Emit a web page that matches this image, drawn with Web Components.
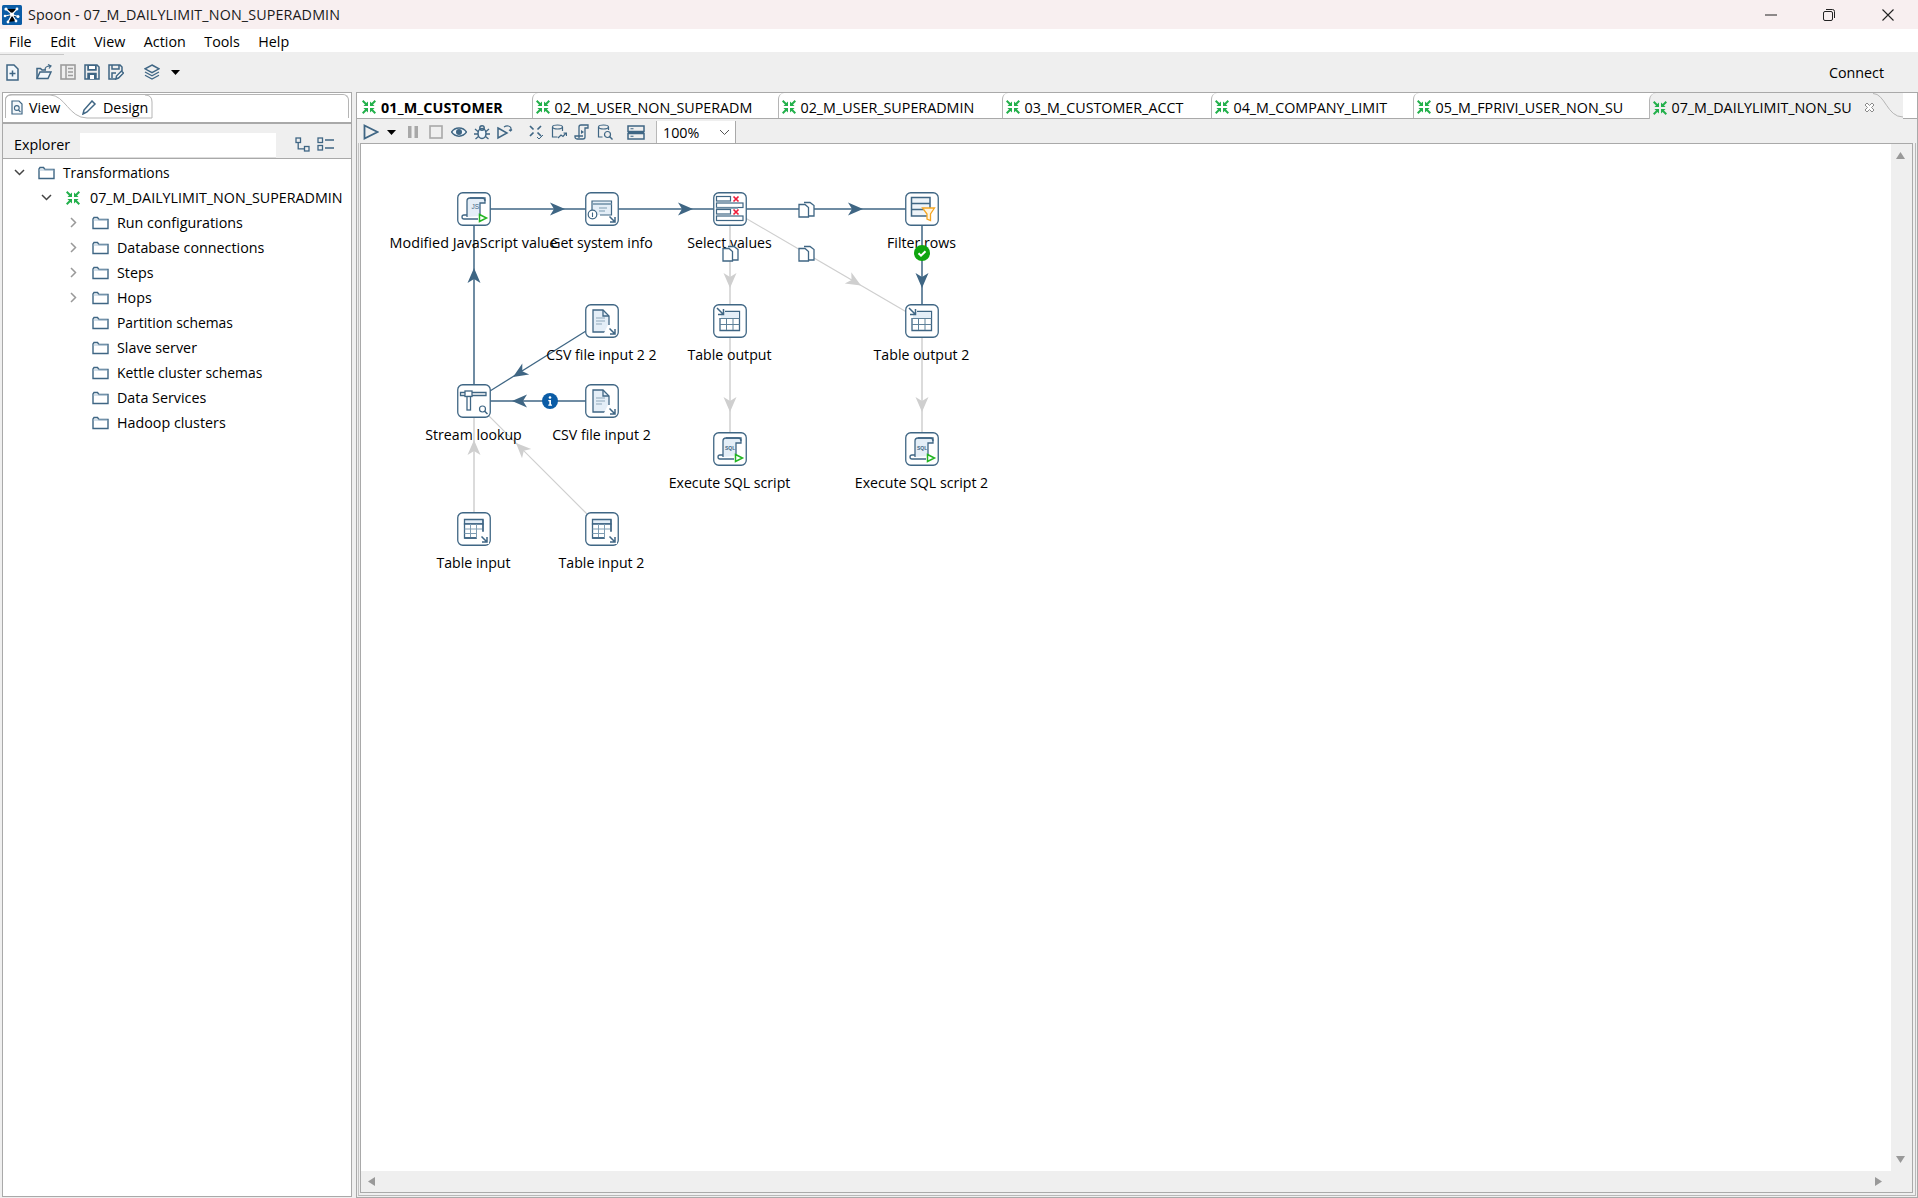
<!DOCTYPE html>
<html><head><meta charset="utf-8"><title>Spoon</title>
<style>
html,body{margin:0;padding:0;height:100%;overflow:hidden;background:#fff}
body{font:14.3px "Open Sans","Noto Sans",sans-serif;color:#000}
</style></head><body>
<spoon-app>
  <title-bar slot="title">Spoon - 07_M_DAILYLIMIT_NON_SUPERADMIN</title-bar>
  <menu-bar slot="menu"><span>File</span><span>Edit</span><span>View</span><span>Action</span><span>Tools</span><span>Help</span></menu-bar>
  <main-toolbar slot="toolbar"></main-toolbar>
  <explorer-panel slot="left">
    <tree-row level="0" state="open" icon="folder" style="font-size:13.8px">Transformations</tree-row>
    <tree-row level="1" state="open" icon="trans">07_M_DAILYLIMIT_NON_SUPERADMIN</tree-row>
    <tree-row level="2" state="closed" icon="folder">Run configurations</tree-row>
    <tree-row level="2" state="closed" icon="folder">Database connections</tree-row>
    <tree-row level="2" state="closed" icon="folder">Steps</tree-row>
    <tree-row level="2" state="closed" icon="folder">Hops</tree-row>
    <tree-row level="2" icon="folder" style="font-size:13.9px">Partition schemas</tree-row>
    <tree-row level="2" icon="folder">Slave server</tree-row>
    <tree-row level="2" icon="folder" style="font-size:13.9px">Kettle cluster schemas</tree-row>
    <tree-row level="2" icon="folder">Data Services</tree-row>
    <tree-row level="2" icon="folder">Hadoop clusters</tree-row>
  </explorer-panel>
  <graph-panel slot="right">
    <graph-tab slot="tabs" w="175" bold>01_M_CUSTOMER</graph-tab>
    <graph-tab slot="tabs" w="246">02_M_USER_NON_SUPERADM</graph-tab>
    <graph-tab slot="tabs" w="224">02_M_USER_SUPERADMIN</graph-tab>
    <graph-tab slot="tabs" w="209">03_M_CUSTOMER_ACCT</graph-tab>
    <graph-tab slot="tabs" w="202">04_M_COMPANY_LIMIT</graph-tab>
    <graph-tab slot="tabs" w="236">05_M_FPRIVI_USER_NON_SU</graph-tab>
    <graph-tab slot="tabs" w="254" active>07_M_DAILYLIMIT_NON_SU</graph-tab>

    <hop-lines></hop-lines>
    <step-node x="457" y="192" icon="js" style="font-size:14.4px">Modified JavaScript value</step-node>
    <step-node x="585" y="192" icon="sys">Get system info</step-node>
    <step-node x="713" y="192" icon="select">Select values</step-node>
    <step-node x="905" y="192" icon="filter">Filter rows</step-node>
    <step-node x="585" y="304" icon="csv">CSV file input 2 2</step-node>
    <step-node x="713" y="304" icon="tout">Table output</step-node>
    <step-node x="905" y="304" icon="tout">Table output 2</step-node>
    <step-node x="457" y="384" icon="lookup">Stream lookup</step-node>
    <step-node x="585" y="384" icon="csv">CSV file input 2</step-node>
    <step-node x="713" y="432" icon="sql">Execute SQL script</step-node>
    <step-node x="905" y="432" icon="sql">Execute SQL script 2</step-node>
    <step-node x="457" y="512" icon="tin">Table input</step-node>
    <step-node x="585" y="512" icon="tin">Table input 2</step-node>
    <hop-badge x="798" y="201" kind="copy"></hop-badge>
    <hop-badge x="722" y="245" kind="copy"></hop-badge>
    <hop-badge x="798" y="245" kind="copy"></hop-badge>
    <hop-badge x="914" y="245" kind="ok"></hop-badge>
    <hop-badge x="542" y="393" kind="info"></hop-badge>
  </graph-panel>
</spoon-app>
<script>
const B='#3f6684', L='#e4eef7', G='#22b04b', ORIGIN={x:361,y:144};
const svg=(w,h,body,vb)=>`<svg width="${w}" height="${h}" viewBox="${vb||`0 0 ${w} ${h}`}" style="display:block;flex:none" fill="none" stroke="${B}" stroke-width="1.5">${body}</svg>`;
const transIcon=()=>svg(16,16,`<g fill="${G}" stroke="none"><path d="M7 7H2.4L4 5.4 1 2.4 2.4 1l3 3L7 2.4zM9 7h4.6L12 5.4l3-3L13.6 1l-3 3L9 2.4zM7 9H2.4L4 10.6l-3 3L2.4 15l3-3L7 13.6zM9 9h4.6L12 10.6l3 3L13.6 15l-3-3L9 13.6z"/></g>`);
const folderIcon=()=>svg(17,14,`<path d="M1 3V12.5H16V3.5H7L5.5 1.5H2z" fill="#fff" stroke-width="1.4"/><path d="M1.5 4H15.5" stroke="#a9c0d2" stroke-width="1"/>`);
const define=(n,css,html,extra)=>{customElements.define(n,class extends HTMLElement{
  connectedCallback(){ if(this.shadowRoot) return; const r=this.attachShadow({mode:'open'});
    r.innerHTML=`<style>${css}</style>`+(typeof html==='function'?html(this):html); if(extra) extra(this,r);}
});};

define('spoon-app',`:host{display:flex;flex-direction:column;height:100vh;width:100%;overflow:hidden}
 .main{flex:1;min-height:0;display:flex;background:#efefef;padding-left:2px;gap:4px}`,
 `<slot name="title"></slot><slot name="menu"></slot><slot name="toolbar"></slot><div class="main"><slot name="left"></slot><slot name="right"></slot></div>`);

define('title-bar',`:host{display:flex;align-items:center;height:29px;background:#f8eff0;flex:none;font-size:14.3px;color:#1a1a1a;letter-spacing:.13px}
 .logo{margin-left:2px;margin-right:6px}
 .t{flex:1}
 .c{display:flex;align-items:center;justify-content:center;width:58.5px;height:29px}
 .win{display:flex;margin-right:1px}`,
 ()=>`<div class="logo"><svg width="20" height="20" viewBox="0 0 20 20" style="display:block"><rect width="20" height="20" rx="1.5" fill="#0b5ca6"/><g stroke="#fff" stroke-width="1.2"><path d="M4 4l6 5.5L15 4M3 11l7-1.5 6 2M6 17l4-7.5 4 6.5"/></g><g fill="#fff"><circle cx="4" cy="4" r="1.6"/><circle cx="15" cy="4" r="1.4"/><circle cx="3" cy="11" r="1.3"/><circle cx="16" cy="11.5" r="1.5"/><circle cx="6" cy="17" r="1.4"/><circle cx="14" cy="16" r="1.4"/><circle cx="10" cy="9.5" r="2"/></g></svg></div>
 <div class="t"><slot></slot></div>
 <div class="win"><div class="c"><svg width="12" height="2" style="display:block"><path d="M0 1H12" stroke="#222" stroke-width="1"/></svg></div>
 <div class="c"><svg width="12" height="12" style="display:block" fill="none" stroke="#222"><rect x=".5" y="2.5" width="9" height="9" rx="1.5"/><path d="M3 .5h6.5a2 2 0 0 1 2 2V9"/></svg></div>
 <div class="c"><svg width="12" height="12" style="display:block" stroke="#222" stroke-width="1.1"><path d="M.5.5l11 11M11.5.5l-11 11"/></svg></div></div>`);

define('menu-bar',`:host{display:flex;align-items:center;gap:18.5px;height:23px;padding:1px 0 0 9px;box-sizing:border-box;background:#fff;flex:none;font-size:14.3px}`,`<slot></slot>`);

define('main-toolbar',`:host{display:flex;align-items:center;height:40px;flex:none;background:#efefef linear-gradient(#c8c8c8,#c8c8c8) 0 2px/64px 1px no-repeat;padding-left:6px;font-size:14.3px}
 .i{display:block;flex:none}.sp{flex:1}.conn{margin-right:34px}`,
 ()=>`<span style="margin-right:17px">${svg(13,17,`<path d="M1 1h7l4 4v11H1z" fill="#f2f7fb"/><path d="M6.5 6.5v6M3.5 9.5h6"/>`)}</span>
 <span style="margin-right:8px">${svg(16,16,`<path d="M1 14.5V4.5h3.5l1.5 1.5h4" /><path d="M1 14.5l3-6.5h11l-3 6.5z" fill="#f2f7fb"/><path d="M9 6c0-3 2-4 5-4M12 .5l3 1.5-2 2.500" stroke-width="1.2"/>`)}</span>
 <span style="margin-right:8px">${svg(16,16,`<rect x="1" y="1" width="14" height="14" fill="#eee" stroke="#9c9c9c" stroke-width="1.6"/><path d="M6 1v14M8 4.500h5M8 8h5M8 11.500h5" stroke="#9c9c9c" stroke-width="1.5"/>`)}</span>
 <span style="margin-right:8px">${svg(16,16,`<path d="M1 1h12l2 2v12H1z"/><path d="M4 1v5h8V1M4 15V9.500h8V15" fill="${B}" stroke="${B}"/><rect x="6" y="11" width="4" height="4" fill="#fff" stroke="none"/><rect x="5" y="2" width="6" height="3" fill="#fff" stroke="none"/>`)}</span>
 <span style="margin-right:20px">${svg(16,16,`<path d="M8 15H1V1h11l2 2v4"/><path d="M4 1v4h7V1" /><path d="M4 14V9h4" /><path d="M8 15l.5-3 5-5 2 2-5 5z" fill="#fff"/>`)}</span>
 <span style="margin-right:11px">${svg(16,16,`<path d="M8 1l7 3.800-7 3.800-7-3.800z"/><path d="M1 8l7 3.800L15 8M1 11.200L8 15l7-3.800" stroke-width="1.3"/>`)}</span>
 ${svg(9,5,`<path d="M0 0h9L4.500 5z" fill="#000" stroke="none"/>`)}
 <span class="sp"></span><span class="conn">Connect</span>`);

define('explorer-panel',`:host{display:flex;flex-direction:column;width:350px;flex:none;box-sizing:border-box;border:1px solid #a9a9a9;background:#fff;height:calc(100% - 1px);margin-bottom:1px}
 .strip{position:relative;height:24px;margin:1px 2px 0 2px;border:1px solid #b5b5b5;border-bottom:0;border-radius:6px 6px 0 0;box-sizing:border-box;flex:none}
 .strip svg.o{position:absolute;left:-1px;top:-1px}
 .tab{position:absolute;top:0;display:flex;align-items:center;gap:6px;height:24px}
 .thick{height:4px;background:#fff;border-bottom:2px solid #a9a9a9;flex:none;margin:0}
 .ex{display:flex;align-items:center;height:26px;padding-top:8px;background:#efefef;border-bottom:1px solid #a9a9a9;flex:none}
 .ex .lbl{margin-left:11px;width:66px;margin-top:-1px}
 .inp{width:196px;height:24px;background:#fff;box-shadow:0 1px 0 #ddd}
 .tools{display:flex;gap:7px;margin-left:19px;margin-top:-2px}
 .tree{flex:1;padding-top:1px;background:#fff}`,
 ()=>`<div class="strip"><svg class="o" width="346" height="25" fill="none"><path d="M0 24V7Q0 1 7 1H45C60 1 64 24 82 24H147V8Q147 1 140 1" stroke="#b5b5b5"/></svg>
  <div class="tab" style="left:5px">${svg(12,15,`<path d="M1 1h7l3 3v10H1z" fill="#f4f8fb" stroke-width="1.2"/><circle cx="5.800" cy="8" r="2.400" stroke-width="1.1"/><path d="M7.500 10l2 2" stroke-width="1.1"/>`)}<span>View</span></div>
  <div class="tab" style="left:76px">${svg(15,15,`<path d="M1 14l1-4 8-9 3 3-8 8z"/>`)}<span>Design</span></div></div>
 <div class="thick"></div>
 <div class="ex"><span class="lbl">Explorer</span><div class="inp"></div>
 <div class="tools">${svg(15,15,`<rect x="1" y="1" width="4.500" height="4.500" stroke-width="1.3"/><rect x="9.500" y="9.500" width="4.500" height="4.500" stroke-width="1.3"/><path d="M3.200 5.500v6.300h6.300" stroke-width="1.3"/>`)}${svg(18,14,`<rect x="1" y="1" width="4.500" height="4.500" stroke-width="1.3"/><rect x="1" y="8.500" width="4.500" height="4.500" stroke-width="1.3"/><path d="M8 3h9M8 11h9" stroke-width="1.3"/>`)}</div></div>
 <div class="tree"><slot></slot></div>`);

define('tree-row',`:host{display:flex;align-items:center;height:25px;white-space:nowrap;font-size:14.3px}
 .ch{width:24px;flex:none;display:flex;justify-content:center;margin-right:7px}
 .ic{flex:none;width:25px;display:flex}`,
 h=>{const lv=+h.getAttribute('level'),st=h.getAttribute('state');
  const pad=[4,31,58][lv];
  const ch=st==='open'?`<svg width="11" height="7" style="display:block" fill="none" stroke="#444" stroke-width="1.5"><path d="M1 1l4.500 4.500L10 1"/></svg>`:st==='closed'?`<svg width="7" height="11" style="display:block" fill="none" stroke="#999" stroke-width="1.5"><path d="M1 1l4.500 4.500L1 10"/></svg>`:'';
  return `<div style="width:${pad}px;flex:none"></div><div class="ch">${ch}</div><div class="ic">${h.getAttribute('icon')==='trans'?transIcon():folderIcon()}</div><slot></slot>`;});

define('graph-panel',`:host{display:flex;flex:1;min-width:0;height:100%;box-sizing:border-box;border:1px solid #a9a9a9;border-top:0;flex-direction:column;background:#efefef}
 .tabs{display:flex;flex:none;background:#fff;border-top:1px solid #a9a9a9;border-bottom:1px solid #a9a9a9;box-sizing:border-box;height:27px}
 .tb{height:24px;box-sizing:border-box;padding:2px 0 0 6px;display:flex;align-items:center;flex:none}
 .sep{width:1px;height:22px;background:#b8b8b8;margin:0 0 0 11px}
 .zoom{width:79px;height:22px;background:#fff;display:flex;align-items:center;justify-content:space-between;box-sizing:border-box;padding:0 5px 0 6px;border-right:1px solid #a9a9a9}
 .body{flex:1;min-height:0;display:flex;border-left:1px solid #c2c2c2;border-bottom:1px solid #b8b8b8;border-right:1px solid #b8b8b8;margin:0 1px 1px 1px;padding:0 2px 2px 1px}
 .frame{flex:1;min-width:0;display:grid;grid-template-columns:1fr 21px;grid-template-rows:1fr 21px;border:1px solid #a9a9a9;background:#efefef}
 .canvas{position:relative;background:#fff;overflow:hidden}
 .vs{display:flex;flex-direction:column;justify-content:space-between;align-items:center;padding:8px 2px 8px 0}
 .hs{display:flex;justify-content:space-between;align-items:center;padding:0 9px 1px 7px}`,
 ()=>`<div class="tabs"><slot name="tabs"></slot></div>
 <div class="tb">
  <span style="margin-right:8px">${svg(16,16,`<path d="M1.500 1.500L14.500 8 1.500 14.500z" stroke-width="1.8"/>`)}</span>
  <span style="margin-right:12px">${svg(9,5,`<path d="M0 0h9L4.500 5z" fill="#000" stroke="none"/>`)}</span>
  <span style="margin-right:11px">${svg(10,14,`<path d="M0 1h3.500v12H0zM6.500 1H10v12H6.500z" fill="#a8a8a8" stroke="none"/>`)}</span>
  <span style="margin-right:8px">${svg(14,14,`<rect x="1" y="1" width="12" height="12" stroke="#a8a8a8" stroke-width="1.6"/>`)}</span>
  <span style="margin-right:7px">${svg(16,12,`<path d="M.5 6C4 .5 12 .5 15.500 6 12 11.500 4 11.500 .5 6z" fill="#f0f6fb"/><circle cx="8" cy="6" r="3" fill="${B}" stroke="none"/>`)}</span>
  <span style="margin-right:7px">${svg(16,16,`<ellipse cx="8" cy="9.500" rx="4" ry="5" fill="#f0f6fb"/><circle cx="8" cy="4" r="2.200"/><path d="M1 5l3 2.500M15 5l-3 2.500M0 10h4M16 10h-4M1.500 15l3-2.500M14.500 15l-3-2.500" stroke-width="1.300"/>`)}</span>
  <span style="margin-right:15px">${svg(16,16,`<path d="M1 4l9 5-9 5z" stroke-width="1.500"/><path d="M7 3c3-2 6-1 7 1l-.5 3M15 5.500l-1.500 1.500L12 5.800" stroke-width="1.200"/>`)}</span>
  <span style="margin-right:7px">${svg(16,16,`<g stroke-width="1.700"><path d="M2 2l3.500 3.500M13 2L9.500 5.500M2 12l3.500-3.500M13 12L9.500 8.500"/></g><path d="M9 13l2 2 4-4" stroke-width="1"/>`)}</span>
  <span style="margin-right:7px">${svg(16,16,`<ellipse cx="6.500" cy="3" rx="5" ry="2" stroke-width="1.200"/><path d="M1.500 3v10h5M11.500 3v4" stroke-width="1.200"/><path d="M7 14l3-3 2 1.500 3-3.500M12.500 9H15.500v3" stroke-width="1.200"/>`)}</span>
  <span style="margin-right:7px">${svg(16,16,`<path d="M5 14V3a2 2 0 0 1 2-2h7v3h-3v9a2 2 0 0 1-2 2H3a2 2 0 0 1-2-2v-1h8" stroke-width="1.300"/><path d="M7 6l3 2-3 2z" fill="${B}" stroke="none"/>`)}</span>
  <span style="margin-right:14px">${svg(16,16,`<ellipse cx="6.500" cy="3" rx="5" ry="2" stroke-width="1.200"/><path d="M1.500 3v10h4M11.500 3v3" stroke-width="1.200"/><circle cx="10.500" cy="10.500" r="3" stroke-width="1.200"/><path d="M12.500 12.500l3 3" stroke-width="1.400"/>`)}</span>
  ${svg(18,15,`<rect x="1" y="1" width="16" height="5.500" stroke-width="1.500"/><rect x="1" y="8.500" width="16" height="5.500" stroke-width="1.500"/><path d="M3.500 3.700h3M3.500 11.200h3M1 7.500h16" stroke-width="1.100"/>`)}
  <span class="sep"></span>
  <div class="zoom"><span>100%</span><svg width="11" height="7" style="display:block" fill="none" stroke="#555"><path d="M1 1l4.500 4.500L10 1"/></svg></div>
 </div>
 <div class="body"><div class="frame">
  <div class="canvas"><slot></slot></div>
  <div class="vs"><svg width="9" height="7" style="display:block"><path d="M4.500 0L9 7H0z" fill="#999"/></svg><svg width="9" height="7" style="display:block"><path d="M4.500 7L9 0H0z" fill="#999"/></svg></div>
  <div class="hs"><svg width="7" height="9" style="display:block"><path d="M0 4.500L7 0v9z" fill="#999"/></svg><svg width="7" height="9" style="display:block"><path d="M7 4.500L0 0v9z" fill="#999"/></svg></div>
  <div></div>
 </div></div>`);

define('graph-tab',`:host{display:flex;align-items:center;flex:none;box-sizing:border-box;height:25px;padding:3px 0 0 2px;gap:3.5px;white-space:nowrap;font-size:14.3px;position:relative;border-left:1px solid #b5b5b5;border-radius:6px 0 0 0;background:#fff}
 :host([bold]){font-weight:700;border-left:0;padding-left:4px;gap:4px;letter-spacing:.15px}
 :host([active]){background:#efefef;height:26px;margin-bottom:-1px;border-top-left-radius:7px}
 .cl{position:absolute;left:214px;top:9px}
 .curve{position:absolute;right:0;top:0}
 .t{display:block}`,
 h=>{h.style.width=h.getAttribute('w')+'px';
   const a=h.hasAttribute('active');
   return `${transIcon()}<span class="t"><slot></slot></span>`+(a?`<svg class="curve" width="34" height="26" fill="none"><path d="M0 0H4C16 0 18 24 34 24V26H0z" fill="#efefef"/><path d="M4 .5C16 .5 18 24 34 24" stroke="#b5b5b5"/></svg><svg class="cl" width="11" height="11" fill="#fff" stroke="#8a8a8a" style="display:block"><path d="M1 3l2-2 2.500 2.500L8 1l2 2-2.500 2.500L10 8l-2 2-2.500-2.500L3 10 1 8l2.500-2.500z"/></svg>`:'');});

define('hop-lines',`:host{display:block;position:absolute;left:0;top:0;width:100%;height:100%}`,
 ()=>{
  const D=B,A='#cfcfcf';
  const hop=(x1,y1,x2,y2,tx,ty,c,w)=>{
    const len=Math.hypot(x2-x1,y2-y1),ux=(x2-x1)/len,uy=(y2-y1)/len,nx=-uy,ny=ux;
    const L=15,H=6.5,N=4;
    const p=(a,b)=>`${(tx-ux*a+nx*b).toFixed(1)},${(ty-uy*a+ny*b).toFixed(1)}`;
    return `<path d="M${x1} ${y1}L${x2} ${y2}" stroke="${c}" stroke-width="${w}"/><polygon points="${p(0,0)} ${p(L,H)} ${p(L-N,0)} ${p(L,-H)}" fill="${c}"/>`;
  };
  return `<svg width="1530" height="1027" viewBox="${ORIGIN.x} ${ORIGIN.y} 1530 1027" style="display:block" fill="none">
   ${hop(730,209,922,321,861,285.4,A,1.2)}
   ${hop(730,209,730,321,730,288,A,1.5)}
   ${hop(602,529,474,401,516,443,A,1.2)}
   ${hop(474,529,474,401,474,440,A,1.5)}
   ${hop(730,321,730,449,730,412,A,1.5)}
   ${hop(922,321,922,449,922,412,A,1.5)}
   ${hop(474,209,602,209,565,209,D,1.5)}
   ${hop(602,209,730,209,693,209,D,1.5)}
   ${hop(730,209,922,209,863,209,D,1.5)}
   ${hop(922,209,922,321,922,288,D,1.5)}
   ${hop(474,401,474,209,474,268,D,1.5)}
   ${hop(602,321,474,401,513,377,D,1.2)}
   ${hop(602,401,474,401,512,401,D,1.5)}
  </svg>`;});

const arrowBR=`<path d="M24.500 24.500l5 5M30 25v5h-5" stroke-width="1.500"/>`;
const stepIcons={
 js:`<path d="M10 25V9a3 3 0 0 1 3-3h15v5h-5v13" stroke-width="1.300" fill="${L}"/><path d="M13 6h12a3 3 0 0 1 3 3" stroke-width="1.300"/><path d="M10 23H7a2 2 0 0 0 0 4h14" stroke-width="1.300"/><text x="14.500" y="17" font-size="6.500" fill="${B}" stroke="none" font-family="Liberation Sans">JS</text><path d="M22.500 22.500l7 3.500-7 3.500z" stroke="#22b522" fill="#fff" stroke-width="1.500"/>`,
 sql:`<path d="M10 25V9a3 3 0 0 1 3-3h15v5h-5v13" stroke-width="1.300" fill="${L}"/><path d="M13 6h12a3 3 0 0 1 3 3" stroke-width="1.300"/><path d="M10 23H7a2 2 0 0 0 0 4h14" stroke-width="1.300"/><text x="12" y="17.500" font-size="5" font-weight="700" fill="${B}" stroke="none" font-family="Liberation Sans">SQL</text><path d="M22.500 22.500l7 3.500-7 3.500z" stroke="#22b522" fill="#fff" stroke-width="1.500"/>`,
 sys:`<rect x="7" y="9" width="19" height="14" fill="${L}" stroke="none"/><path d="M7 18V9h19.500v14H15" stroke-width="1.200"/><path d="M7 12h19.500" stroke-width="1.800" stroke="#7f9db3"/><path d="M14 16h8M14 19h6" stroke="#9db6c8"/><circle cx="7.500" cy="22.500" r="4.300" fill="#fff" stroke-width="1.200"/><path d="M7.500 20.500v4.500" stroke-width="1.100"/>${arrowBR}`,
 select:`<g stroke-width="1.200"><rect x="3.500" y="4.500" width="14" height="4.500" fill="#fff"/><rect x="3.500" y="11" width="26.500" height="4.500" fill="#fff"/><rect x="3" y="15.500" width="22" height="1.500" fill="#8fa8ba" stroke="none"/><rect x="3.500" y="17.500" width="14" height="4.500" fill="#fff"/><rect x="3.500" y="24" width="26.500" height="4.500" fill="#fff"/></g><path d="M20.500 4.500l5 5M25.500 4.500l-5 5M20.500 17.500l5 5M25.500 17.500l-5 5" stroke="#ee1c3a" stroke-width="1.700"/>`,
 filter:`<rect x="6.500" y="5.500" width="18.500" height="18.500" fill="#eef4f9" stroke-width="1.500"/><path d="M6.500 11.500H25M6.500 17.500H21" stroke-width="1.300"/><path d="M17.500 16H29.500L25.500 22V28.500L22 27V22z" fill="#fff6e2" stroke="#f5a623" stroke-width="1.300"/>`,
 csv:`<path d="M8 6h10l6 6v16H8z" fill="${L}" stroke-width="1.300"/><path d="M18 6v6h6" stroke-width="1.300"/><path d="M11 14h9M11 17h9M11 20h6" stroke="#8fa8ba" stroke-width="1"/><path d="M19 29H30V21H23z" fill="#fff" stroke="none"/>${arrowBR}`,
 tin:`<path d="M7.500 7.500H26V12H7.500z" fill="${L}" stroke-width="1.300"/><path d="M7.500 12H26V26H7.500z" fill="#fff" stroke-width="1.300"/><path d="M7.500 17H26M7.500 21.500H26M13.500 12v14M19.500 12v14" stroke="#7f9db3" stroke-width="1"/><path d="M20 20H32V32H20z" fill="#fff" stroke="none"/><path d="M26 7.500V19M7.500 26H19" stroke-width="1.300"/>${arrowBR}`,
 tout:`<path d="M7 7H27V27H7z" fill="#fff" stroke="none"/><path d="M12 7.500H26.500V26.500H7V14" stroke-width="1.300"/><path d="M8 8h18v6H8z" fill="${L}" stroke="none"/><path d="M7 14.500H26.500M7 20.500H26.500M13.500 14v12M20 14v12" stroke-width="1" stroke="#5f8199"/><path d="M4 4l6 6M10.500 5v5.500H5" stroke-width="1.500"/>`,
 lookup:`<path d="M3.500 8.500H29V11.500H3.500z" fill="#fff" stroke-width="1.300"/><rect x="8" y="7" width="7" height="5.500" fill="#fff" stroke-width="1.300"/><rect x="10" y="12.500" width="3.500" height="13.500" fill="#fff" stroke-width="1.300"/><circle cx="25.500" cy="25" r="3" stroke-width="1.200"/><path d="M27.500 27l3 3" stroke-width="1.500"/>`
};
define('step-node',`:host{position:absolute;display:block;width:34px;height:34px;font-size:14.15px}
 .lab{position:absolute;left:16.5px;top:38px;transform:translateX(-50%);white-space:nowrap;line-height:26px}`,
 h=>{h.style.left=(h.getAttribute('x')-ORIGIN.x)+'px';h.style.top=(h.getAttribute('y')-ORIGIN.y)+'px';
  return svg(34,34,`<rect x=".75" y=".75" width="32.500" height="32.500" rx="5" fill="#fff" stroke-width="1.300"/>${stepIcons[h.getAttribute('icon')]}`)+`<div class="lab"><slot></slot></div>`;});

define('hop-badge',`:host{position:absolute;display:block}`,
 h=>{h.style.left=(h.getAttribute('x')-ORIGIN.x)+'px';h.style.top=(h.getAttribute('y')-ORIGIN.y)+'px';
  const k=h.getAttribute('kind');
  if(k==='copy') return svg(17,17,`<path d="M6 1.500h6l4 3V15H10" fill="#fff" stroke-width="1.300"/><path d="M1 3.500h6l3.500 3V16H1z" fill="#fff" stroke-width="1.300"/>`);
  if(k==='ok') return `<svg width="16" height="16" style="display:block"><circle cx="8" cy="8" r="8" fill="#0fa50f"/><path d="M4.500 8.200l2.500 2.500 4.500-4.500" fill="none" stroke="#fff" stroke-width="2"/></svg>`;
  return `<svg width="16" height="16" style="display:block"><circle cx="8" cy="8" r="8" fill="#0b5ca6"/><circle cx="8" cy="4.500" r="1.300" fill="#fff"/><path d="M6.300 7H9v4.500h1v1.200H6.300v-1.200h1V8.200h-1z" fill="#fff"/></svg>`;});
</script>
</body></html>
